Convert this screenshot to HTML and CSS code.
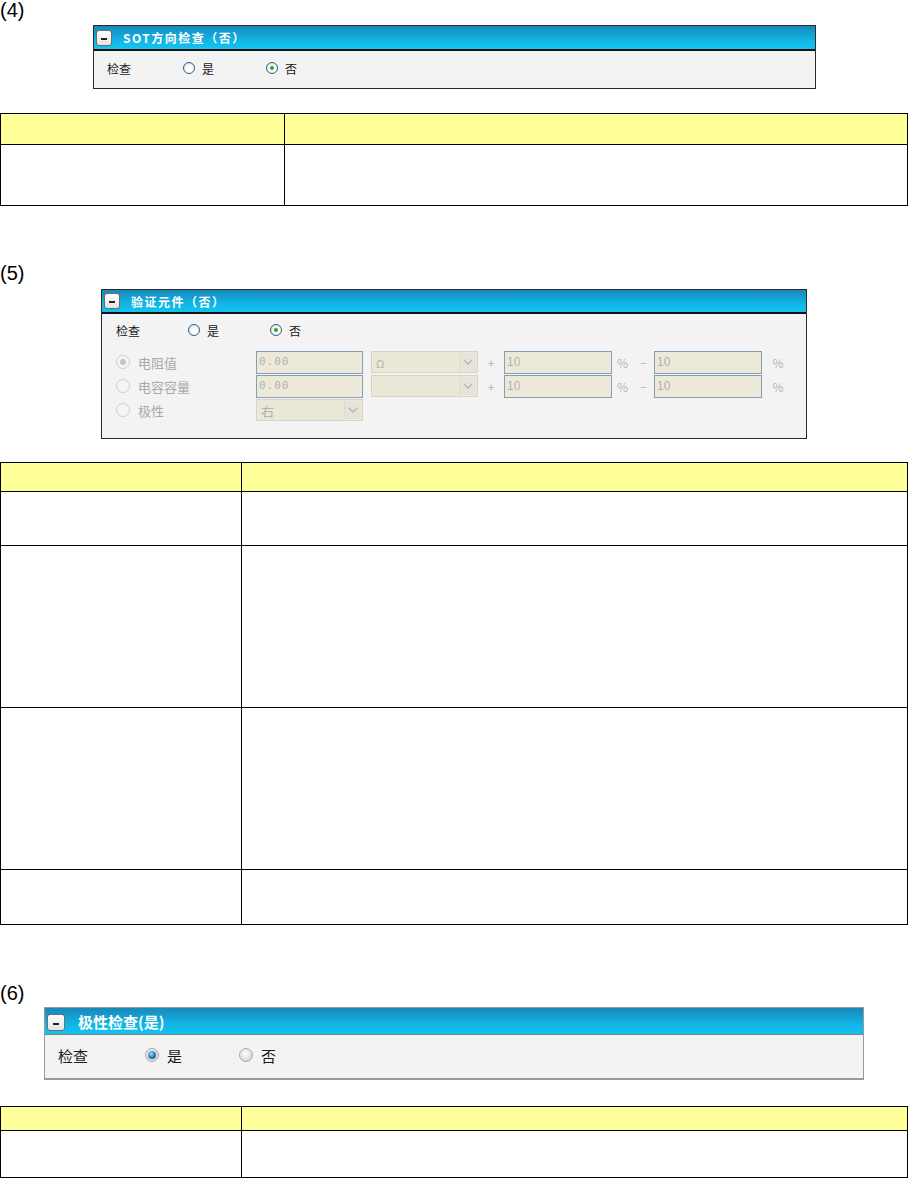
FILE: index.html
```html
<!DOCTYPE html>
<html lang="zh-CN">
<head>
    <meta charset="UTF-8">
    <meta name="viewport" content="width=device-width, initial-scale=1.0">
    <title>检查设置</title>
    <link rel="stylesheet" href="styles.css">
</head>
<body>
    <!-- (4) SOT方向检查 -->
    <section class="block block-4">
        <div class="sec-label">(4)</div>
        <div class="panel panel-sot">
            <div class="panel-head">
                <span class="collapse-btn"></span>
                <span class="panel-title">SOT方向检查（否）</span>
            </div>
            <div class="panel-body">
                <div class="check-row">
                    <span class="check-label">检查</span>
                    <span class="opt"><span class="radio"></span>是</span>
                    <span class="opt"><span class="radio on"></span>否</span>
                </div>
            </div>
        </div>
        <table class="desc desc-4">
            <colgroup><col class="key-col"><col></colgroup>
            <tr class="head-row"><td></td><td></td></tr>
            <tr class="body-row"><td></td><td></td></tr>
        </table>
    </section>

    <!-- (5) 验证元件 -->
    <section class="block block-5">
        <div class="sec-label">(5)</div>
        <div class="panel panel-verify">
            <div class="panel-head">
                <span class="collapse-btn"></span>
                <span class="panel-title">验证元件（否）</span>
            </div>
            <div class="panel-body">
                <div class="check-row">
                    <span class="check-label">检查</span>
                    <span class="opt"><span class="radio"></span>是</span>
                    <span class="opt"><span class="radio on"></span>否</span>
                </div>
                <div class="fields">
                    <div class="field-row">
                        <span class="field-opt"><span class="radio off on"></span>电阻值</span>
                        <span class="inp mono">0.00</span>
                        <span class="sel sel-unit">Ω<span class="sel-arrow"><svg width="10" height="6" viewBox="0 0 10 6"><polyline points="1,1 5,5 9,1" fill="none" stroke="#b5b5b5" stroke-width="1.4"/></svg></span></span>
                        <span class="sign sign-plus">+</span>
                        <span class="inp">10</span>
                        <span class="sign sign-pct">%</span>
                        <span class="sign sign-pct">−</span>
                        <span class="inp">10</span>
                        <span class="sign sign-end">%</span>
                    </div>
                    <div class="field-row">
                        <span class="field-opt"><span class="radio off"></span>电容容量</span>
                        <span class="inp mono">0.00</span>
                        <span class="sel sel-unit"><span class="sel-arrow"><svg width="10" height="6" viewBox="0 0 10 6"><polyline points="1,1 5,5 9,1" fill="none" stroke="#b5b5b5" stroke-width="1.4"/></svg></span></span>
                        <span class="sign sign-plus">+</span>
                        <span class="inp">10</span>
                        <span class="sign sign-pct">%</span>
                        <span class="sign sign-pct">−</span>
                        <span class="inp">10</span>
                        <span class="sign sign-end">%</span>
                    </div>
                    <div class="field-row">
                        <span class="field-opt"><span class="radio off"></span>极性</span>
                        <span class="sel sel-pol">右<span class="sel-arrow"><svg width="10" height="6" viewBox="0 0 10 6"><polyline points="1,1 5,5 9,1" fill="none" stroke="#b5b5b5" stroke-width="1.4"/></svg></span></span>
                    </div>
                </div>
            </div>
        </div>
        <table class="desc desc-5">
            <colgroup><col class="key-col"><col></colgroup>
            <tr class="head-row"><td></td><td></td></tr>
            <tr class="row-a"><td></td><td></td></tr>
            <tr class="row-b"><td></td><td></td></tr>
            <tr class="row-b"><td></td><td></td></tr>
            <tr class="row-c"><td></td><td></td></tr>
        </table>
    </section>

    <!-- (6) 极性检查 -->
    <section class="block block-6">
        <div class="sec-label">(6)</div>
        <div class="panel panel-polarity">
            <div class="panel-head">
                <span class="collapse-btn"></span>
                <span class="panel-title">极性检查(是)</span>
            </div>
            <div class="panel-body">
                <div class="check-row">
                    <span class="check-label">检查</span>
                    <span class="opt"><span class="radio gloss on"></span>是</span>
                    <span class="opt"><span class="radio gloss"></span>否</span>
                </div>
            </div>
        </div>
        <table class="desc desc-6">
            <colgroup><col class="key-col"><col></colgroup>
            <tr class="head-row"><td></td><td></td></tr>
            <tr class="body-row"><td></td><td></td></tr>
        </table>
    </section>
</body>
</html>
```

FILE: styles.css
```css
html, body {
    margin: 0;
    padding: 0;
    background-color: #fff;
}

body {
    width: 908px;
    font-family: "Liberation Sans", Arial, "Noto Sans CJK SC", sans-serif;
    color: #000;
}

.sec-label {
    height: 20px;
    font-size: 20px;
    line-height: 20px;
}

.block-5 { margin-top: 57px; }
.block-6 { margin-top: 58px; }

/* ---------- panels ---------- */

.panel {
    box-sizing: border-box;
    border: 1px solid #2a2a2a;
    background-color: #f3f3f3;
    font-family: "Noto Sans CJK SC", "Liberation Sans", sans-serif;
    font-size: 12px;
    color: #1a1a1a;
}

.panel-head {
    display: flex;
    align-items: center;
    height: 23px;
    padding-left: 2px;
    background: linear-gradient(#1888ba, #11b7e6 65%, #13c3ef);
    border-bottom: 2px solid #111;
}

.collapse-btn {
    position: relative;
    box-sizing: border-box;
    width: 16px;
    height: 16px;
    border: 1px solid #6d6d6d;
    border-radius: 3px;
    background: linear-gradient(#ffffff, #e4e4e4);
}

.collapse-btn::after {
    content: "";
    position: absolute;
    left: 4px;
    top: 7px;
    width: 6px;
    height: 2px;
    background-color: #222;
}

.panel-title {
    margin-left: 11px;
    color: #fff;
    font-weight: bold;
    letter-spacing: 1.5px;
}

.check-row {
    display: flex;
    align-items: center;
    height: 16px;
}

.opt {
    display: flex;
    align-items: center;
}

.radio {
    box-sizing: border-box;
    display: inline-block;
    position: relative;
    width: 12px;
    height: 12px;
    margin-right: 7px;
    border: 1px solid #2f5c86;
    border-radius: 50%;
    background: radial-gradient(circle at 60% 65%, #ffffff 30%, #d8d8d0);
}

.radio.on::after {
    content: "";
    position: absolute;
    left: 3px;
    top: 3px;
    width: 4px;
    height: 4px;
    border-radius: 50%;
    background-color: #2aa52a;
}

/* disabled radios in the verify panel */
.radio.off {
    width: 14px;
    height: 14px;
    margin-right: 8px;
    border-color: #cfcfcf;
    background: #f5f5f5;
}

.radio.off.on::after {
    left: 3px;
    top: 3px;
    width: 6px;
    height: 6px;
    background-color: #c4c4c4;
}

/* glossy radios in the polarity panel */
.radio.gloss {
    width: 14px;
    height: 14px;
    margin-right: 8px;
    border: 1px solid #a9a9a9;
    background: radial-gradient(circle at 45% 40%, #ffffff, #d2d2d2 80%);
}

.radio.gloss.on::after {
    left: 2px;
    top: 2px;
    width: 8px;
    height: 8px;
    background: radial-gradient(circle at 40% 35%, #a8dcfa, #1d78b8 55%, #0c3f70);
}

/* (4) */
.panel-sot {
    width: 723px;
    margin: 5px 0 0 93px;
}

.panel-sot .panel-body {
    height: 37px;
    padding: 9px 0 0 13px;
    box-sizing: border-box;
}

.panel-sot .check-label { width: 76px; }
.panel-sot .opt { width: 83px; }

/* (5) */
.panel-verify {
    width: 706px;
    margin: 6px 0 0 101px;
}

.panel-verify .panel-head {
    height: 22px;
    padding-left: 2px;
}

.panel-verify .panel-body {
    box-sizing: border-box;
    height: 124px;
    padding: 8px 0 0 14px;
}

.panel-verify .check-label { width: 72px; }
.panel-verify .opt { width: 82px; }

.fields {
    margin-top: 13px;
    display: flex;
    flex-direction: column;
    gap: 2px;
}

.field-row {
    display: flex;
    align-items: center;
    height: 22px;
    color: #a9a9a9;
}

.field-opt {
    display: flex;
    align-items: center;
    width: 140px;
    font-size: 13px;
}

.inp {
    box-sizing: border-box;
    width: 108px;
    height: 23px;
    padding: 3px 0 0 2px;
    border: 1px solid #849fba;
    background-color: #ece9d9;
    font-family: "Liberation Sans", sans-serif;
    font-size: 12px;
    color: #b2b2b2;
}

.inp.mono {
    width: 107px;
    font-family: "DejaVu Sans Mono", monospace;
    font-size: 11px;
    letter-spacing: 1px;
}

.sel {
    box-sizing: border-box;
    position: relative;
    display: inline-block;
    width: 107px;
    height: 22px;
    padding: 3px 0 0 4px;
    border: 1px solid #d6d4c6;
    background-color: #ebe8d8;
    font-size: 11px;
    color: #b2b2b2;
}

.sel-unit { margin-left: 8px; }

.sel-arrow {
    position: absolute;
    right: 1px;
    top: 1px;
    bottom: 1px;
    width: 16px;
    display: flex;
    align-items: center;
    justify-content: center;
    border-left: 1px solid #dddbcf;
    background-color: #e6e4d8;
}

.sel-pol {
    font-size: 13px;
    padding: 1px 0 0 4px;
}

.sign {
    text-align: center;
    font-size: 12px;
    color: #b5b5b5;
}

.sign-plus { width: 26px; }
.sign-pct { width: 21px; }
.sign-end { width: 32px; }

/* (6) */
.panel-polarity {
    width: 820px;
    margin: 4px 0 0 44px;
    border: 1px solid #9a9a9a;
    border-bottom-width: 2px;
    font-size: 15px;
}

.panel-polarity .panel-head {
    height: 26px;
    border-bottom: 1px solid #808080;
}

.panel-polarity .collapse-btn {
    width: 18px;
    height: 17px;
    margin-top: 2px;
}

.panel-polarity .collapse-btn::after {
    left: 5px;
    top: 8px;
}

.panel-polarity .panel-title {
    margin-left: 13px;
    font-size: 15px;
    letter-spacing: 0;
}

.panel-polarity .panel-body {
    box-sizing: border-box;
    height: 43px;
    padding: 12px 0 0 13px;
}

.panel-polarity .check-label { width: 87px; }
.panel-polarity .opt { width: 94px; }

/* ---------- description tables ---------- */

.desc {
    width: 908px;
    border-collapse: collapse;
    table-layout: fixed;
}

.desc td {
    padding: 0;
    border: 1px solid #000;
}

.desc .head-row td {
    background-color: #ffff99;
}

.desc-4 { margin-top: 24px; }
.desc-4 .key-col { width: 284px; }
.desc-4 .head-row { height: 31px; }
.desc-4 .body-row { height: 61px; }

.desc-5 { margin-top: 23px; }
.desc-5 .key-col { width: 241px; }
.desc-5 .head-row { height: 29px; }
.desc-5 .row-a { height: 54px; }
.desc-5 .row-b { height: 162px; }
.desc-5 .row-c { height: 55px; }

.desc-6 { margin-top: 26px; }
.desc-6 .key-col { width: 241px; }
.desc-6 .head-row { height: 24px; }
.desc-6 .body-row { height: 47px; }
```
